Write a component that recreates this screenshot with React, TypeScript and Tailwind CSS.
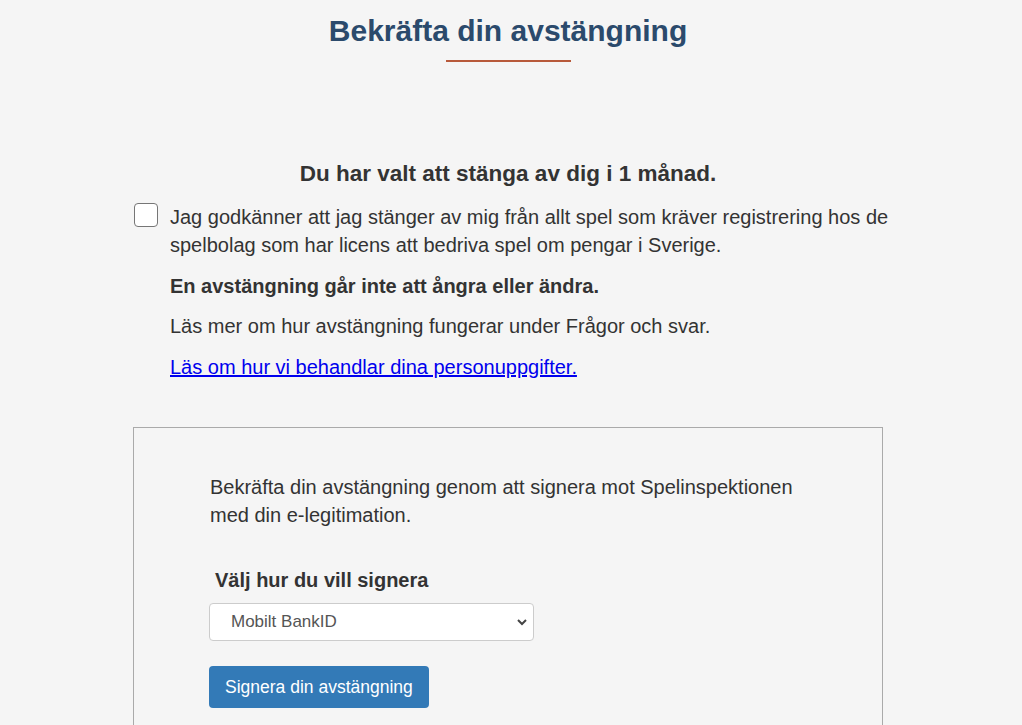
import React from "react";

const App: React.FC = () => {
  return (
    <div
      className="min-h-[725px] bg-[#f5f5f5] text-[#333333]"
      style={{ fontFamily: '"Liberation Sans", Arial, sans-serif' }}
    >
      <div className="ml-[133px] w-[750px] pt-[15px]">
        <h1 className="text-center text-[30px] font-bold leading-[32px] text-[#2b4a6c]">
          Bekräfta din avstängning
        </h1>
        <div className="mx-auto mt-[13px] h-[2px] w-[125px] bg-[#b85a3b]" />

        <h2 className="mt-[98px] text-center text-[22.5px] font-bold leading-[28px]">
          Du har valt att stänga av dig i 1 månad.
        </h2>

        <div className="mt-[15px] flex items-start pl-[1px]">
          <input
            type="checkbox"
            className="h-[24px] w-[24px] shrink-0 appearance-none rounded-[4px] border border-[#767676] bg-white"
          />
          <div className="ml-[12px] w-[730px] shrink-0 text-[20px] leading-[28px]">
            <p>
              Jag godkänner att jag stänger av mig från allt spel som kräver registrering hos de
              spelbolag som har licens att bedriva spel om pengar i Sverige.
            </p>
            <p className="mt-[13px] font-bold">En avstängning går inte att ångra eller ändra.</p>
            <p className="mt-[12px]">Läs mer om hur avstängning fungerar under Frågor och svar.</p>
            <p className="mt-[13px]">
              <a href="#" className="text-[#0000ee] underline">
                Läs om hur vi behandlar dina personuppgifter.
              </a>
            </p>
          </div>
        </div>

        <div className="mt-[46px] border border-[#aaaaaa] pl-[76px] pt-[45px] pb-[40px]">
          <p className="w-[600px] text-[20px] leading-[28px]">
            Bekräfta din avstängning genom att signera mot Spelinspektionen med din e-legitimation.
          </p>
          <label className="mt-[37px] block pl-[5px] text-[20px] font-bold leading-[28px]">
            Välj hur du vill signera
          </label>
          <div className="relative -ml-[1px] mt-[9px] w-[325px]">
            <select className="h-[38px] w-full appearance-none rounded-[4px] border border-[#cccccc] bg-white pl-[21px] text-[17px] text-[#555555]">
              <option>Mobilt BankID</option>
            </select>
            <svg
              className="pointer-events-none absolute right-[6px] top-[13px]"
              width="12"
              height="12"
              viewBox="0 0 12 12"
            >
              <path d="M2 4l4 4 4-4" fill="none" stroke="#444" strokeWidth="2" />
            </svg>
          </div>
          <button className="-ml-[1px] mt-[25px] h-[42px] rounded-[4px] bg-[#337ab7] px-[16px] text-[17.5px] text-white">
            Signera din avstängning
          </button>
        </div>
      </div>
    </div>
  );
};

export default App;
